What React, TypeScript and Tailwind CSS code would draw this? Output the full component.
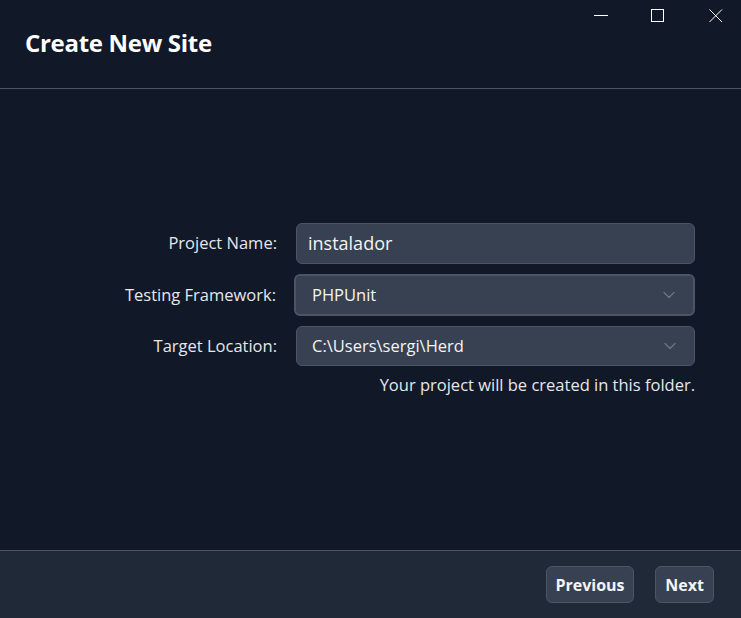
import React from "react";

const font = { fontFamily: '"Open Sans", "Noto Sans", sans-serif' };

function Chevron() {
  return (
    <svg width="14" height="14" viewBox="0 0 14 14" fill="none" className="text-gray-500">
      <path d="M2 4.5 L7 9.5 L12 4.5" stroke="currentColor" strokeWidth="1.4" strokeLinecap="round" strokeLinejoin="round" />
    </svg>
  );
}

export default function App() {
  return (
    <div className="relative flex h-[618px] w-[741px] flex-col bg-[#111827] text-white" style={font}>
      {/* window controls */}
      <div className="absolute right-[18px] top-[9px] flex items-center">
        <svg width="14" height="14" viewBox="0 0 14 14"><path d="M0 6.5 H14" stroke="white" strokeWidth="1" /></svg>
        <svg className="ml-[43px]" width="14" height="14" viewBox="0 0 14 14"><rect x="0.5" y="0.5" width="12" height="12" stroke="white" strokeWidth="1" fill="none" /></svg>
        <svg className="ml-[44px]" width="14" height="14" viewBox="0 0 14 14"><path d="M0.5 0.5 L13 13 M13 0.5 L0.5 13" stroke="white" strokeWidth="1" /></svg>
      </div>

      <div className="flex h-[89px] shrink-0 items-center border-b border-[#4b5563] pl-[25px] pb-[3px]">
        <h1 className="text-[24px] font-bold tracking-[-0.3px]">Create New Site</h1>
      </div>

      <div className="flex flex-1 flex-col pt-[134px] pr-[46px]">
        <div className="flex flex-col gap-[10px]">
          <div className="flex items-center justify-end">
            <span className="mr-[19px] text-[16.5px] text-gray-200">Project Name:</span>
            <div className="flex h-[41px] w-[399px] items-center rounded-md border border-[#4b5563] bg-[#374151] px-[11px] text-[18px] text-gray-100">
              instalador
            </div>
          </div>
          <div className="flex items-center justify-end">
            <span className="mr-[18px] text-[16.5px] text-gray-200">Testing Framework:</span>
            <div className="flex h-[42px] w-[401px] items-center justify-between rounded-md border-2 border-[#4b5563] bg-[#374151] pl-[16px] pr-[17px] text-[16.5px] text-gray-100">
              <span>PHPUnit</span>
              <Chevron />
            </div>
          </div>
          <div className="flex items-center justify-end">
            <span className="mr-[19px] text-[16.5px] text-gray-200">Target Location:</span>
            <div className="flex h-[40px] w-[399px] items-center justify-between rounded-md border border-[#4b5563] bg-[#374151] pl-[15px] pr-[17px] text-[16.5px] text-gray-100">
              <span>C:\Users\sergi\Herd</span>
              <Chevron />
            </div>
          </div>
        </div>
        <div className="mt-[7px] text-right text-[16.5px] text-gray-200">Your project will be created in this folder.</div>
      </div>

      <div className="flex h-[68px] shrink-0 items-center justify-end gap-[21px] border-t border-[#4b5563] bg-[#1f2937] pr-[27px]">
        <button className="h-[37px] w-[88px] rounded-md border border-[#4b5563] bg-[#374151] text-[16px] font-bold text-gray-100">
          Previous
        </button>
        <button className="h-[37px] w-[59px] rounded-md border border-[#4b5563] bg-[#374151] text-[16px] font-bold text-gray-100">
          Next
        </button>
      </div>
    </div>
  );
}
